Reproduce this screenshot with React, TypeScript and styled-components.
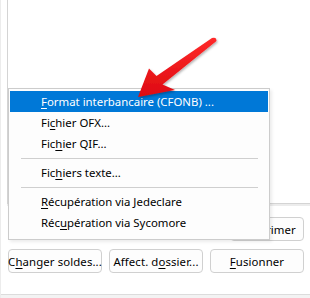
import React from "react";
import styled, { createGlobalStyle } from "styled-components";

const GlobalStyle = createGlobalStyle`
  html, body {
    margin: 0;
    padding: 0;
    background: #ffffff;
  }
  body {
    font-family: "Noto Sans", "Open Sans", sans-serif;
    font-size: 11.4px;
    color: #000;
  }
`;

const Window = styled.div`
  position: relative;
  width: 310px;
  height: 298px;
  overflow: hidden;
  background: #fff;
  border-left: 1px solid #ececec;
  box-sizing: border-box;
  display: flex;
  flex-direction: column;
`;

const ListPanel = styled.div`
  height: 203px;
  margin-left: 6px;
  border-left: 1px solid #d4d4d4;
  border-bottom: 1px solid #d4d4d4;
  box-shadow: 0 2px 0 #ececec;
  background: #fff;
`;

const ButtonArea = styled.div`
  display: flex;
  flex-direction: column;
  gap: 8px;
  padding: 13px 0 0 7px;
  flex: 1;
`;

const TopRow = styled.div`
  display: flex;
  justify-content: flex-end;
  padding-right: 6px;
`;

const ButtonRow = styled.div`
  display: grid;
  grid-template-columns: repeat(4, 94px);
  column-gap: 7px;
`;

const Button = styled.div<{ $width?: number }>`
  width: ${(p) => (p.$width ? `${p.$width}px` : "auto")};
  height: 24px;
  box-sizing: border-box;
  border: 1px solid #d0d0d0;
  border-radius: 4px;
  background: #fdfdfd;
  display: flex;
  align-items: center;
  justify-content: center;
  white-space: nowrap;
  font-size: 11.4px;
  letter-spacing: 0.1px;
`;

const Footer = styled.div`
  height: 3px;
  border-top: 1px solid #dcdcdc;
  background: #f3f3f3;
`;

const Menu = styled.div`
  position: absolute;
  left: 7px;
  top: 88px;
  width: 262px;
  box-sizing: border-box;
  border: 1px solid #cccccc;
  background: #fdfdfd;
  padding: 2px 1px 6px 1px;
  box-shadow: 2px 2px 3px rgba(0, 0, 0, 0.08);
`;

const Item = styled.div<{ $active?: boolean }>`
  height: 21px;
  display: flex;
  align-items: center;
  padding-left: 31px;
  white-space: nowrap;
  background: ${(p) => (p.$active ? "#0078d7" : "transparent")};
  color: ${(p) => (p.$active ? "#ffffff" : "#000000")};
`;

const Separator = styled.div`
  height: 8px;
  display: flex;
  align-items: center;
  margin: 0 10px 0 11px;
  &::after {
    content: "";
    flex: 1;
    height: 1px;
    background: #cfcfcf;
  }
`;

const Key = styled.span`
  text-decoration: underline;
  text-underline-offset: 2px;
`;

const ArrowLayer = styled.svg`
  position: absolute;
  left: 0;
  top: 0;
  pointer-events: none;
`;

const menuItems: Array<{ before: string; key: string; after: string } | "sep"> = [
  { before: "", key: "F", after: "ormat interbancaire (CFONB) ..." },
  { before: "Fi", key: "c", after: "hier OFX..." },
  { before: "Fic", key: "h", after: "ier QIF..." },
  "sep",
  { before: "Fic", key: "h", after: "iers texte..." },
  "sep",
  { before: "", key: "R", after: "écupération via Jedeclare" },
  { before: "Réc", key: "u", after: "pération via Sycomore" },
];

export default function App() {
  return (
    <>
      <GlobalStyle />
      <Window>
        <ListPanel />
        <ButtonArea>
          <TopRow>
            <Button $width={74}>
              <Key>S</Key>upprimer
            </Button>
          </TopRow>
          <ButtonRow>
            <Button>
              C<Key>h</Key>anger soldes...
            </Button>
            <Button>
              Affect. d<Key>o</Key>ssier...
            </Button>
            <Button>
              <Key>F</Key>usionner
            </Button>
            <Button />
          </ButtonRow>
        </ButtonArea>
        <Footer />

        <Menu>
          {menuItems.map((it, i) =>
            it === "sep" ? (
              <Separator key={i} />
            ) : (
              <Item key={i} $active={i === 0}>
                {it.before}
                <Key>{it.key}</Key>
                {it.after}
              </Item>
            )
          )}
        </Menu>

        <ArrowLayer width="310" height="298" viewBox="0 0 310 298">
          <defs>
            <linearGradient id="arrowRed" x1="0" y1="0" x2="0" y2="1">
              <stop offset="0" stopColor="#ff2a2a" />
              <stop offset="1" stopColor="#dd0a10" />
            </linearGradient>
            <filter id="arrowShadow" x="-20%" y="-20%" width="140%" height="140%">
              <feDropShadow dx="1" dy="1.5" stdDeviation="1.2" floodColor="#000" floodOpacity="0.3" />
            </filter>
          </defs>
          <path
            d="M137 97 L148 68.5 L155.5 76 L211 38 Q215.5 36.5 215.5 41 L161.5 84.5 L174 90 Z"
            fill="url(#arrowRed)"
            filter="url(#arrowShadow)"
          />
        </ArrowLayer>
      </Window>
    </>
  );
}
